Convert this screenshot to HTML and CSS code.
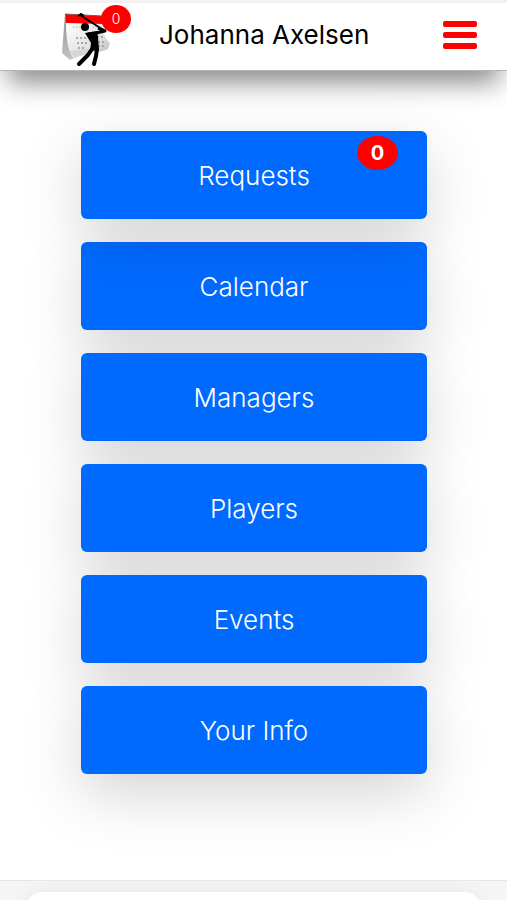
FILE: index.html
```html
<!DOCTYPE html>
<html lang="en">
<head>
    <meta charset="UTF-8">
    <meta name="viewport" content="width=device-width, initial-scale=1.0">
    <title>Home</title>
    <link rel="stylesheet" href="styles.css">
</head>
<body>
    <header class="topbar">
        <a href="#" class="logo">
            <svg width="52" height="59" viewBox="0 0 52 59" aria-hidden="true">
                <defs>
                    <linearGradient id="page" x1="0" y1="0" x2="1" y2="1">
                        <stop offset="0" stop-color="#fff"/>
                        <stop offset=".6" stop-color="#e2e2e2"/>
                        <stop offset="1" stop-color="#b5b5b5"/>
                    </linearGradient>
                    <linearGradient id="side" x1="0" y1="0" x2="0" y2="1">
                        <stop offset="0" stop-color="#8f8f8f"/>
                        <stop offset="1" stop-color="#c4c4c4"/>
                    </linearGradient>
                </defs>
                <!-- calendar -->
                <path d="M5 6 L2 45 L10 52 L16 49 L12 42 Z" fill="url(#side)"/>
                <path d="M6 15 L41 15 Q43 29 50 35 L48 41 Q38 45 32 44 L13 50 Q6 40 6 15 Z" fill="url(#page)"/>
                <path d="M10 43 L14 50 L30 45 L28 41 Z" fill="#d6d6d6"/>
                <path d="M5 6 L42 8 L43 16 L6 15 Z" fill="#f00"/>
                <path d="M5 6 L42 8" stroke="#8d5050" stroke-width="1"/>
                <path d="M13 19 h11 M32 19 h6" stroke="#bbb" stroke-width="1" stroke-dasharray="2 1"/>
                <path d="M16 30 h12 M17 35 h10 M18 40 h8 M37 29 h6 M38 34 h8 M38 38 h7" stroke="#a8a8a8" stroke-width="2" stroke-dasharray="2 2"/>
                <!-- golfer -->
                <path d="M20 7 L45 23" stroke="#000" stroke-width="2"/>
                <path d="M18 8 L21 6 L24 8" stroke="#000" stroke-width="2" fill="none"/>
                <circle cx="25" cy="19" r="4"/>
                <path d="M28 26 L36 25 L45 23 L38 20" stroke="#000" stroke-width="3" fill="none" stroke-linejoin="round"/>
                <path d="M25 25 L37 23 L38 29 L39 42 L30 43 L31 35 Z"/>
                <path d="M32 41 L28 47 L19 56" stroke="#000" stroke-width="4" fill="none" stroke-linecap="round"/>
                <path d="M37 41 L36 48 L34 56" stroke="#000" stroke-width="4" fill="none" stroke-linecap="round"/>
            </svg>
            <span class="badge badge-logo">0</span>
        </a>
        <h1 class="name">Johanna Axelsen</h1>
        <button type="button" class="menu-button" aria-label="Menu">
            <span class="bar"></span>
            <span class="bar"></span>
            <span class="bar"></span>
        </button>
    </header>

    <main class="menu">
        <button type="button" class="menu-item has-badge">Requests<span class="badge badge-item">0</span></button>
        <button type="button" class="menu-item">Calendar</button>
        <button type="button" class="menu-item">Managers</button>
        <button type="button" class="menu-item">Players</button>
        <button type="button" class="menu-item">Events</button>
        <button type="button" class="menu-item">Your Info</button>
    </main>

    <footer class="footer">
        <div class="footer-card"></div>
    </footer>
</body>
</html>
```

FILE: styles.css
```css
* {
    box-sizing: border-box;
}
body {
    display: flex;
    flex-direction: column;
    min-height: 100vh;
    margin: 0;
    font-family: Inter, "Liberation Sans", sans-serif;
    background-color: #fff;
    color: #000;
}
.topbar {
    display: flex;
    align-items: center;
    height: 71px;
    padding: 0 30px 3px 60px;
    border-top: 3px solid #f1f1f1;
    border-bottom: 1px solid #b4b4b4;
    background-color: #fff;
    box-shadow: 0 20px 26px -8px rgba(0, 0, 0, 0.45);
}
.logo {
    position: relative;
    align-self: flex-end;
    height: 59px;
    text-decoration: none;
}
.badge {
    position: absolute;
    border-radius: 50%;
    background-color: #f00;
    color: #fff;
    text-align: center;
}
.badge-logo {
    top: -3px;
    left: 41px;
    width: 30px;
    height: 28px;
    font-size: 14px;
    font-weight: 300;
    line-height: 28px;
}
.name {
    margin: 0 0 0 47px;
    font-size: 26px;
    font-weight: 400;
    line-height: 32px;
}
.menu-button {
    display: flex;
    flex-direction: column;
    gap: 5px;
    width: 34px;
    margin-left: auto;
    padding: 0;
    border: none;
    background: none;
    cursor: pointer;
}
.bar {
    height: 6px;
    border-radius: 2px;
    background-color: #f00;
}
.menu {
    display: flex;
    flex-direction: column;
    gap: 23px;
    flex: 1;
    padding: 60px 80px 0 81px;
}
.menu-item {
    height: 88px;
    padding: 2px 0 0;
    border: none;
    border-radius: 6px;
    background-color: #006aff;
    box-shadow: 0 20px 60px rgba(0, 0, 0, 0.17);
    color: #fff;
    font-family: inherit;
    font-size: 26px;
    font-weight: 300;
    line-height: 32px;
    cursor: pointer;
}
.has-badge {
    position: relative;
}
.badge-item {
    top: 5px;
    right: 29px;
    width: 41px;
    height: 34px;
    font-size: 20px;
    font-weight: 700;
    line-height: 34px;
}
.footer {
    height: 20px;
    padding: 11px 26px 0;
    overflow: hidden;
    border-top: 1px solid #e6e6e6;
    background-color: #f5f5f5;
}
.footer-card {
    height: 40px;
    border-radius: 16px;
    background-color: #fff;
    box-shadow: 0 0 20px rgba(0, 0, 0, 0.06);
}
```
